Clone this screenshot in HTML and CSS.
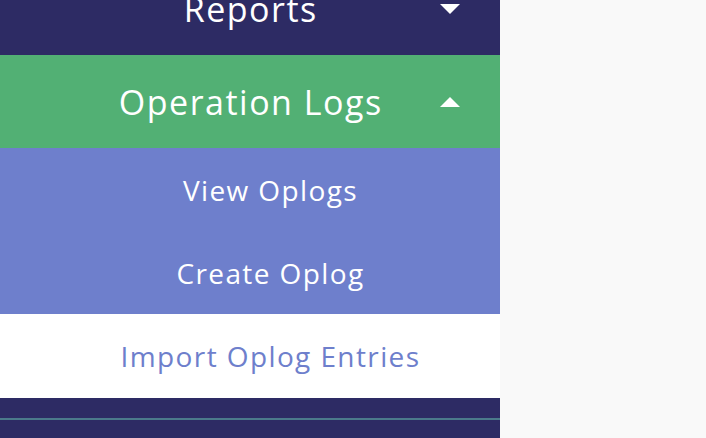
FILE: index.html
```html
<!DOCTYPE html>
<html lang="en">
<head>
<meta charset="utf-8">
<title>Sidebar</title>
<link rel="stylesheet" href="styles.css">
</head>
<body>
<div class="page">
  <nav class="sidebar">
    <div class="menu-item">
      <span class="spacer"></span>
      <span class="label">Reports</span>
      <span class="caret"><svg width="20" height="10" viewBox="0 0 20 10"><polygon points="0,0 20,0 10,10" fill="#fff"/></svg></span>
    </div>
    <div class="menu-item active">
      <span class="spacer"></span>
      <span class="label">Operation Logs</span>
      <span class="caret"><svg width="20" height="10" viewBox="0 0 20 10"><polygon points="0,10 20,10 10,0" fill="#fff"/></svg></span>
    </div>
    <div class="submenu">
      <a class="sub-item">View Oplogs</a>
      <a class="sub-item">Create Oplog</a>
      <a class="sub-item current">Import Oplog Entries</a>
    </div>
    <div class="menu-tail"></div>
    <div class="menu-next"></div>
  </nav>
  <main class="content"></main>
</div>
</body>
</html>
```
FILE: styles.css
```css
html, body {
  margin: 0;
  padding: 0;
  height: 100%;
  overflow: hidden;
  background: #f9f9f9;
}
.page {
  display: flex;
  height: 438px;
  font-family: "Open Sans", "DejaVu Sans", sans-serif;
}
.sidebar {
  width: 500px;
  flex: none;
  display: flex;
  flex-direction: column;
  margin-top: -38px;
  background: #2d2b64;
}
.content {
  flex: 1;
  background: #f9f9f9;
}
.menu-item {
  height: 93px;
  display: grid;
  grid-template-columns: 100px 1fr 100px;
  align-items: center;
  background: #2d2b64;
  color: #fff;
}
.menu-item.active {
  background: #52b074;
}
.label {
  text-align: center;
  font-size: 34px;
  font-weight: 400;
  letter-spacing: 1.5px;
  padding-left: 1.5px;
}
.caret {
  display: flex;
  justify-content: center;
}
.caret svg {
  display: block;
}
.submenu {
  display: flex;
  flex-direction: column;
  background: #6e7fcc;
}
.sub-item {
  height: 83px;
  display: flex;
  align-items: center;
  justify-content: center;
  padding-left: 41px;
  color: #fff;
  font-size: 28px;
  font-weight: 400;
  letter-spacing: 1.4px;
}
.sub-item.current {
  height: 84px;
  background: #fff;
  color: #6e7fcc;
}
.menu-tail {
  height: 20px;
  background: #2d2b64;
}
.menu-next {
  flex: 1;
  border-top: 2px solid #4b7a8b;
  background: #2d2b64;
}
```
